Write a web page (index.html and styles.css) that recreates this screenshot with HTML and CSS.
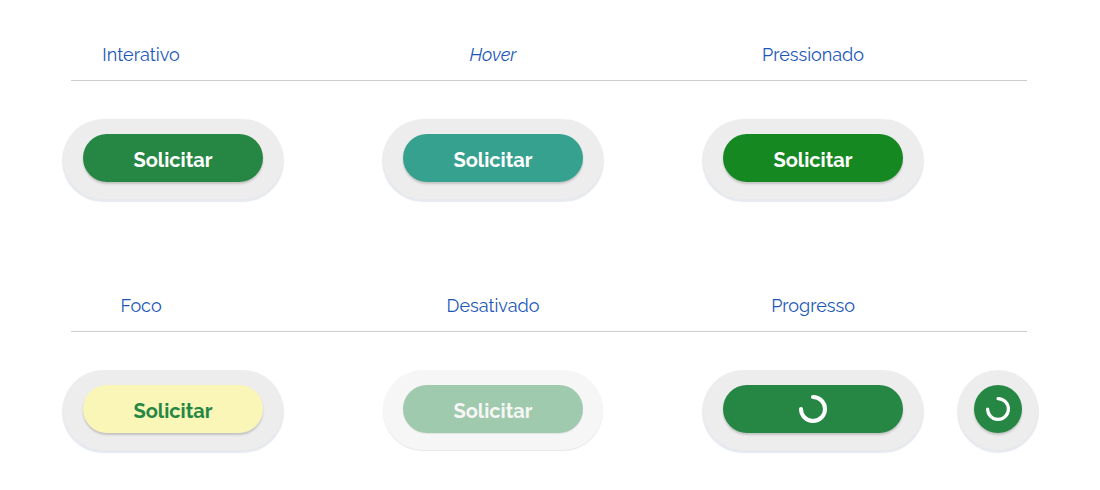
FILE: index.html
```html
<!DOCTYPE html>
<html lang="pt-BR">
<head>
<meta charset="utf-8">
<title>Estados do botão</title>
<link rel="stylesheet" href="styles.css">
</head>
<body>
<main class="states">
  <section class="group">
    <div class="row">
      <h2 class="label label-first">Interativo</h2>
      <h2 class="label"><em>Hover</em></h2>
      <h2 class="label">Pressionado</h2>
    </div>
    <hr class="rule">
    <div class="row">
      <div class="cell"><div class="halo"><button class="btn" type="button">Solicitar</button></div></div>
      <div class="cell"><div class="halo"><button class="btn btn-hover" type="button">Solicitar</button></div></div>
      <div class="cell"><div class="halo"><button class="btn btn-pressed" type="button">Solicitar</button></div></div>
    </div>
  </section>
  <section class="group">
    <div class="row">
      <h2 class="label label-first">Foco</h2>
      <h2 class="label">Desativado</h2>
      <h2 class="label">Progresso</h2>
    </div>
    <hr class="rule">
    <div class="row">
      <div class="cell"><div class="halo"><button class="btn btn-focus" type="button">Solicitar</button></div></div>
      <div class="cell"><div class="halo halo-disabled"><button class="btn btn-disabled" type="button" disabled>Solicitar</button></div></div>
      <div class="cell">
        <div class="halo"><button class="btn" type="button" aria-label="Carregando"><svg class="spinner" viewBox="0 0 28 28" aria-hidden="true"><path d="M14 2A12 12 0 1 1 2 14"/></svg></button></div>
        <div class="halo halo-round"><button class="btn btn-round" type="button" aria-label="Carregando"><svg class="spinner spinner-small" viewBox="0 0 24 24" aria-hidden="true"><path d="M12 1.6A10.4 10.4 0 1 1 1.6 12"/></svg></button></div>
      </div>
    </div>
  </section>
</main>
</body>
</html>
```
FILE: styles.css
```css
* { box-sizing: border-box; }

body {
  margin: 0;
  background: #fff;
  font-family: Raleway, Lato, sans-serif;
}

.states {
  display: flex;
  flex-direction: column;
  gap: 95px;
  padding: 43px 62px 32px 63px;
}

.row {
  display: grid;
  grid-template-columns: 320fr 320fr 335fr;
}

.label {
  width: 220px;
  margin: 0;
  color: #1b57b8;
  font-size: 18px;
  font-weight: 400;
  line-height: 24px;
  text-align: center;
}

.label-first { width: 156px; }

.rule {
  height: 1px;
  margin: 13px 11px 38px 8px;
  border: 0;
  background: #ccc;
}

.cell {
  display: flex;
  gap: 35px;
}

.halo {
  width: 220px;
  height: 80px;
  padding: 15px 20px 17px;
  border-radius: 40px;
  background: #ededed;
  box-shadow: 0 2px 1px 1px #e6e9ee;
}

.halo-disabled {
  background: #f6f6f6;
  box-shadow: 0 1px 1px #e4e6ec;
}

.halo-round {
  width: 80px;
  padding: 15px 16px 17px;
}

.btn {
  display: flex;
  align-items: center;
  justify-content: center;
  width: 100%;
  height: 48px;
  padding: 4px 0 0;
  border: 0;
  border-radius: 24px;
  background: #268744;
  box-shadow: 0 2px 2px #c4c4c4;
  color: #fff;
  font-family: inherit;
  font-size: 20px;
  font-weight: 700;
  line-height: 24px;
}

.btn-hover { background: #36a18f; }
.btn-pressed { background: #168821; }

.btn-focus {
  background: #faf6b8;
  color: #268744;
}

.btn-disabled {
  background: #9fcaad;
  box-shadow: 0 1px 1px #e4e4e4;
  color: #f6f6f6;
}

.btn:has(.spinner) { padding: 0; }

.spinner {
  width: 28px;
  height: 28px;
  fill: none;
  stroke: #fff;
  stroke-width: 4;
  stroke-linecap: round;
}

.spinner-small {
  width: 24px;
  height: 24px;
  stroke-width: 3.2;
}
```
